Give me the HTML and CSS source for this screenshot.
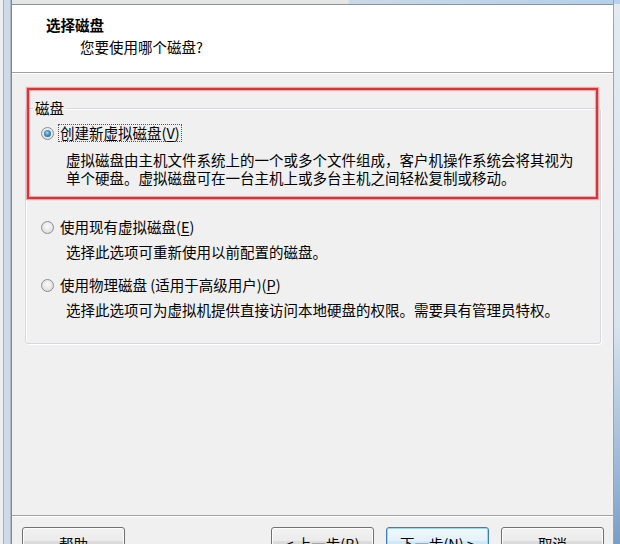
FILE: index.html
```html
<!DOCTYPE html>
<html lang="zh-CN">
<head>
<meta charset="utf-8">
<title>选择磁盘</title>
<link rel="stylesheet" href="styles.css">
</head>
<body>
<div class="window">
  <div class="lframe"></div>
  <div class="center">
    <div class="topstrip"></div>
    <div class="client">
      <header class="header">
        <div class="title">选择磁盘</div>
        <div class="subtitle">您要使用哪个磁盘?</div>
      </header>
      <main class="body">
        <fieldset class="group">
          <legend class="legend">磁盘</legend>
          <div class="opt opt1">
            <span class="radio checked"></span>
            <span class="lbl focus">创建新虚拟磁盘(<u>V</u>)</span>
          </div>
          <div class="desc desc1">虚拟磁盘由主机文件系统上的一个或多个文件组成，客户机操作系统会将其视为<br>单个硬盘。虚拟磁盘可在一台主机上或多台主机之间轻松复制或移动。</div>
          <div class="opt opt2">
            <span class="radio"></span>
            <span class="lbl">使用现有虚拟磁盘(<u>E</u>)</span>
          </div>
          <div class="desc">选择此选项可重新使用以前配置的磁盘。</div>
          <div class="opt opt3">
            <span class="radio"></span>
            <span class="lbl">使用物理磁盘 (适用于高级用户)(<u>P</u>)</span>
          </div>
          <div class="desc">选择此选项可为虚拟机提供直接访问本地硬盘的权限。需要具有管理员特权。</div>
        </fieldset>
        <div class="highlight"></div>
      </main>
      <footer class="footer">
        <button class="btn">帮助</button>
        <div class="spacer"></div>
        <button class="btn">&lt; 上一步(<u>B</u>)</button>
        <button class="btn default">下一步(<u>N</u>) &gt;</button>
        <button class="btn">取消</button>
      </footer>
    </div>
  </div>
  <div class="rframe"></div>
</div>
</body>
</html>
```
FILE: styles.css
```css
* { box-sizing: border-box; }
html, body { margin: 0; padding: 0; }
body {
  width: 620px;
  height: 544px;
  overflow: hidden;
  font-family: "Noto Sans CJK SC", "Microsoft YaHei", sans-serif;
  font-size: 14.5px;
  color: #000;
  background: #e6ebf0;
}
.window { display: flex; height: 544px; }
.lframe {
  width: 12px;
  flex: none;
  background: linear-gradient(to right, #eceef0 0 3px, #a9b0b8 3px 4px, #cddae7 4px 10px, #aeb9c5 10px 11px, #80878f 11px 12px);
}
.center { flex: 1; display: flex; flex-direction: column; min-width: 0; }
.topstrip {
  height: 4px;
  flex: none;
  background: linear-gradient(to right, #e4e6e8 0 336px, #c9d9e9 338px, #b3d0ec 100%);
}
.client {
  flex: 1;
  display: flex;
  flex-direction: column;
  border-top: 1px solid #8d9298;
  background: #f0f0f0;
  min-height: 0;
}
.rframe {
  width: 7px;
  flex: none;
  border-left: 1px solid #9ea4aa;
  background: linear-gradient(to bottom, #b8d2ec 0 4px, #e3eaf1 4px, #d8e3ee 60%, #93b2d2 90%, #7b9dc1 100%);
}

.header {
  height: 68px;
  flex: none;
  background: #fff;
  border-bottom: 1px solid #a0a0a0;
  box-shadow: 0 1px 0 #ffffff;
  padding-top: 10px;
}
.title {
  padding-left: 34px;
  font-weight: bold;
  line-height: 20px;
}
.subtitle {
  padding-left: 68px;
  margin-top: 2px;
  line-height: 20px;
}

.body {
  flex: 1;
  position: relative;
  padding: 26px 12px 0 13px;
  min-height: 0;
}
.group {
  margin: 0;
  padding: 7px 10px 24px 15px;
  border: 1px solid #d5d9dd;
  border-radius: 3px;
  box-shadow: inset 1px 1px 0 #fff, 1px 1px 0 #fff;
}
.legend {
  padding: 0 2px;
  margin-left: -8px;
  line-height: 18px;
}
.opt {
  display: flex;
  align-items: center;
  height: 18px;
}
.opt2 { margin-top: 31px; }
.opt3 { margin-top: 15px; }
.radio {
  width: 13px;
  height: 13px;
  flex: none;
  border-radius: 50%;
  border: 1px solid #8b8e91;
  background: radial-gradient(circle at 50% 40%, #fbfbfb 0%, #e6e6e6 55%, #cfd1d3 100%);
  margin-right: 4px;
  display: flex;
  align-items: center;
  justify-content: center;
}
.radio.checked::after {
  content: "";
  width: 7px;
  height: 7px;
  border-radius: 50%;
  background: radial-gradient(circle at 45% 40%, #a6def5 0%, #3d8fbf 45%, #1f4f78 100%);
}
.lbl {
  padding: 0 1px;
  border: 1px dotted transparent;
  line-height: 16px;
}
.lbl.focus { border-color: #555; }
.desc {
  margin-top: 7px;
  padding-left: 25px;
  line-height: 18px;
  white-space: nowrap;
}
.desc1 { margin-top: 9px; }
u { text-decoration: underline; text-underline-offset: 2px; }

.highlight {
  position: absolute;
  left: 15px;
  top: 15px;
  width: 571px;
  height: 111px;
  border: 2px solid #d8333b;
  box-shadow: 0 0 1px 1px rgba(232, 120, 124, 0.6), inset 0 0 1px 1px rgba(232, 120, 124, 0.6);
  pointer-events: none;
}

.footer {
  height: 29px;
  flex: none;
  display: flex;
  align-items: flex-start;
  border-top: 1px solid #a0a0a0;
  box-shadow: inset 0 1px 0 #fff;
  padding: 11px 9px 0 10px;
  overflow: hidden;
}
.spacer { flex: 1; }
.btn {
  width: 103px;
  height: 28px;
  flex: none;
  margin: 0 0 0 12px;
  padding: 5px 0 0;
  font: inherit;
  line-height: 18px;
  color: #000;
  text-align: center;
  border: 1px solid #707070;
  border-radius: 3px;
  background: linear-gradient(#f2f2f2 0%, #ebebeb 50%, #dddddd 50%, #cfcfcf 100%);
  box-shadow: inset 0 0 0 1px #fcfcfc;
}
.btn:first-child { margin-left: 0; }
.btn.default {
  border-color: #3c7fb1;
  background: linear-gradient(#f0f8fd 0%, #e3f1fb 50%, #d3e9f7 50%, #c4e0f3 100%);
  box-shadow: inset 0 0 0 1px #9fd5f4;
}
```
